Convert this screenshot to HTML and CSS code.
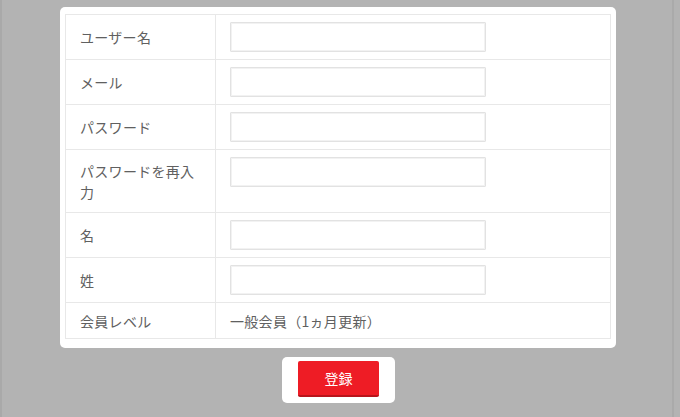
FILE: index.html
```html
<!DOCTYPE html>
<html lang="ja">
<head>
<meta charset="utf-8">
<link rel="stylesheet" href="styles.css">
</head>
<body>
<div class="frame">
  <div class="card">
    <table class="form">
      <tr><td class="label">ユーザー名</td><td class="value"><input class="field" type="text"></td></tr>
      <tr><td class="label">メール</td><td class="value"><input class="field" type="text"></td></tr>
      <tr><td class="label">パスワード</td><td class="value"><input class="field" type="password"></td></tr>
      <tr><td class="label tall">パスワードを再入力</td><td class="value"><input class="field" type="password"></td></tr>
      <tr><td class="label">名</td><td class="value"><input class="field" type="text"></td></tr>
      <tr><td class="label">姓</td><td class="value"><input class="field" type="text"></td></tr>
      <tr class="last"><td class="label">会員レベル</td><td class="value text">一般会員（1ヵ月更新）</td></tr>
    </table>
  </div>
  <div class="actions">
    <button class="submit" type="button">登録</button>
  </div>
</div>
</body>
</html>
```

FILE: styles.css
```css
html, body {
  margin: 0;
  padding: 0;
  background: #b3b3b3;
}
body {
  font-family: "Noto Sans CJK JP", "Noto Sans", sans-serif;
  font-size: 14px;
  color: #606060;
}
.frame {
  width: 670px;
  height: 417px;
  border-left: 2px solid #a9a9a9;
  border-right: 2px solid #aaaaaa;
  box-sizing: content-box;
  overflow: hidden;
}
.card {
  margin: 7px 0 0 58px;
  width: 556px;
  box-sizing: border-box;
  padding: 7px 5px 9px 5px;
  background: #ffffff;
  border-radius: 5px;
}
.form {
  width: 546px;
  border-collapse: collapse;
  border: 1px solid #e6e6e6;
}
.form td {
  border: 1px solid #e8e8e8;
  padding: 7px 14px;
  vertical-align: middle;
}
.label {
  width: 121px;
  line-height: 22px;
  letter-spacing: 0.3px;
}
.form td.label.tall {
  padding-top: 11px;
  padding-bottom: 9px;
  line-height: 21px;
  vertical-align: top;
}
.form td.value {
  vertical-align: top;
}
.form .last td {
  padding-top: 7px;
  padding-bottom: 6px;
}
.form td.value.text {
  vertical-align: middle;
  line-height: 22px;
  letter-spacing: 0.3px;
}
.field {
  display: block;
  width: 256px;
  height: 30px;
  box-sizing: border-box;
  margin: 0;
  border: 1px solid #e2e2e2;
  box-shadow: inset 0 0 0 1px #f2f2f2;
  background: #ffffff;
  border-radius: 1px;
  outline: none;
}
.actions {
  margin: 9px 0 0 280px;
  width: 113px;
  box-sizing: border-box;
  padding: 4px 16px 6px 16px;
  background: #ffffff;
  border-radius: 5px;
}
.submit {
  display: block;
  width: 81px;
  height: 36px;
  margin: 0;
  padding: 0;
  border: none;
  border-bottom: 2px solid #b8141b;
  border-radius: 2px;
  background: #ee1c25;
  color: #ffffff;
  font-family: "Noto Sans CJK JP", "Noto Sans", sans-serif;
  font-size: 14px;
  line-height: 34px;
}
```
